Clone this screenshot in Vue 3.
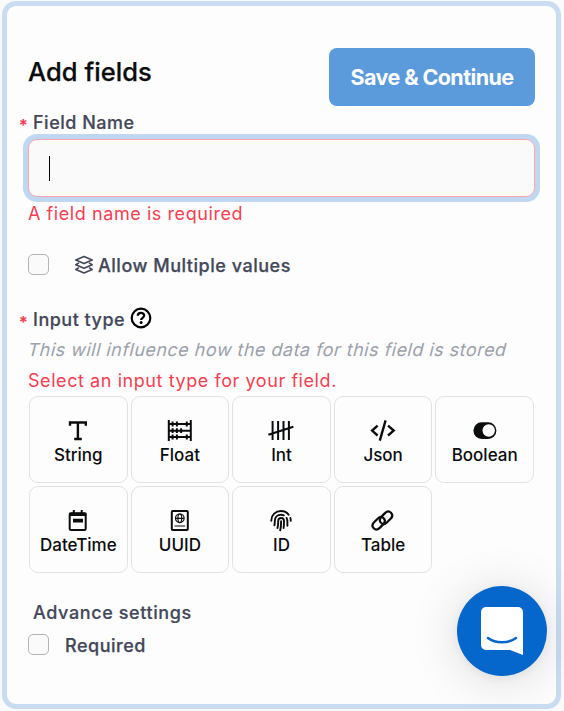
<script setup>
import { ref } from 'vue'

const types = [
  { name: 'String', icon: 'string' },
  { name: 'Float', icon: 'abacus' },
  { name: 'Int', icon: 'tally' },
  { name: 'Json', icon: 'code' },
  { name: 'Boolean', icon: 'toggle' },
  { name: 'DateTime', icon: 'calendar' },
  { name: 'UUID', icon: 'passport' },
  { name: 'ID', icon: 'fingerprint' },
  { name: 'Table', icon: 'link' },
]
const multiple = ref(false)
const required = ref(false)
</script>

<template>
  <main class="page">
    <form class="card" @submit.prevent>
      <header class="header">
        <h1 class="title">Add fields</h1>
        <button class="save" type="submit">Save &amp; Continue</button>
      </header>

      <div class="label label-name"><span class="star">*</span><span>Field Name</span></div>
      <div class="input"><span class="caret"></span></div>
      <p class="error error-name">A field name is required</p>

      <label class="check check-multiple">
        <input v-model="multiple" class="box" type="checkbox" />
        <svg class="stack" viewBox="0 0 20 20">
          <path d="M10 1.6 18.2 5.1 10 8.6 1.8 5.1Z" />
          <path d="M5 7.9 1.8 9.8 10 13.3l8.2-3.5L15 7.9" />
          <path d="M5 12.6 1.8 14.5 10 18l8.2-3.5-3.2-1.9" />
        </svg>
        <span class="check-text">Allow Multiple values</span>
      </label>

      <div class="label label-type">
        <span class="star">*</span><span>Input type</span>
        <svg class="help" viewBox="0 0 22 22">
          <circle cx="11" cy="11" r="9.3" />
          <path d="M7.8 8.8C7.8 6.9 9.2 5.9 11 5.9s3.2 1.1 3.2 2.7c0 2.2-3.1 2.2-3.1 4.4" />
          <circle class="dot" cx="11.1" cy="15.6" r="1.5" />
        </svg>
      </div>
      <p class="hint">This will influence how the data for this field is stored</p>
      <p class="error error-type">Select an input type for your field.</p>

      <div class="grid">
        <button v-for="t in types" :key="t.name" class="type" type="button">
          <svg class="icon" viewBox="0 0 28 24">
            <g v-if="t.icon === 'string'" class="serif">
              <path d="M6 6.8V3.5h15.8v3.3M13.9 3.3v16.8M10.2 20h7.6" />
            </g>
            <g v-else-if="t.icon === 'abacus'">
              <path d="M2.8 1v21M24.8 1v21M2.8 5h22M2.8 11.7h22M2.8 18h22" />
              <path d="M6.6 2.6v4.8M10.9 2.6v4.8M20.8 2.6v4.8M6.6 9.3v4.8M10.9 9.3v4.8M15.1 9.3v4.8M6.6 15.6v4.8M10.9 15.6v4.8M20.8 15.6v4.8" />
            </g>
            <g v-else-if="t.icon === 'tally'">
              <path d="M5.6 2v19M11.1 2v19M16.5 2v19M21.9 2v19M1.4 15.8l25-8" />
            </g>
            <g v-else-if="t.icon === 'code'" class="code">
              <path d="M8.6 6.6 3.1 11.6l5.5 4.9M19 6.6l5.7 5-5.7 4.9M16.6 1.3 10.8 21.7" />
            </g>
            <g v-else-if="t.icon === 'toggle'">
              <rect class="solid" x="2.4" y="3.3" width="23" height="16.6" rx="8.3" />
              <circle class="hole" cx="17.7" cy="11.5" r="6.2" />
            </g>
            <g v-else-if="t.icon === 'calendar'">
              <rect x="5.7" y="4.2" width="16" height="16.8" rx="1.5" />
              <path class="solid" d="M5 3.8h17.4v3.3H5zM9 9.8h10v3.6H9z" />
              <path d="M9.8 1v3M17.7 1v3" />
            </g>
            <g v-else-if="t.icon === 'passport'">
              <rect x="5.8" y="2" width="16" height="19" rx="1" />
              <g class="thin">
                <circle cx="13.8" cy="9.3" r="4.3" />
                <ellipse cx="13.8" cy="9.3" rx="1.9" ry="4.3" />
                <path d="M9.5 9.3h8.6M8.5 17h10.6" />
              </g>
            </g>
            <g v-else-if="t.icon === 'fingerprint'" class="print">
              <path d="M4.3 11.8v-.6c.1-5.1 4.3-9.2 9.6-9.2 3.2 0 6.1 1.5 7.8 3.8M23.4 9c.3.9.4 1.7.3 2.8" />
              <path d="M7.4 16.4c.3-1.3.4-2.6.4-4.5 0-3.6 2.6-6.2 6.2-6.2 1 0 2 .2 2.8.6M19.6 8.9c.7 1.3.8 2.6.8 4.2v3.6" />
              <path d="M10.5 19c.6-2 .7-4.1.7-7 0-1.8 1.2-3 2.900-3s2.900 1.200 2.900 3c0 2.800 0 4.700-.4 7M14.100 12.200c0 4-.1 6.500-.9 9.200" />
            </g>
            <g v-else class="link">
              <path d="M12.500 7.600 16 4.100c2-2 4.400-2 6-.4s1.600 4-.4 6l-3.800 3.800c-1.800 1.800-4.200 1.800-5.800.3-1.300-1.300-1.500-3.300-.4-5" />
              <path d="M14.200 15.400 10.700 18.900c-2 2-4.400 2-6 .4s-1.600-4 .4-6l3.800-3.800c1.800-1.800 4.200-1.800 5.800-.3 1.300 1.300 1.500 3.300.4 5" />
            </g>
          </svg>
          <span class="type-name">{{ t.name }}</span>
        </button>
      </div>

      <h2 class="advance">Advance settings</h2>
      <label class="check check-required">
        <input v-model="required" class="box" type="checkbox" />
        <span class="required-text">Required</span>
      </label>
    </form>

    <button class="chat" type="button" aria-label="Chat">
      <svg class="chat-icon" viewBox="0 0 42 48">
        <path class="bubble" d="M5 0h32a5 5 0 0 1 5 5v43l-13-5H5a5 5 0 0 1-5-5V5a5 5 0 0 1 5-5Z" />
        <path class="smile" d="M7 31c7.500 5.700 20.500 5.700 28 0" />
      </svg>
    </button>
  </main>
</template>

<style>
body {
  background: #fafafa;
}
</style>

<style scoped>
.page {
  box-sizing: border-box;
  width: 564px;
  height: 711px;
  padding: 1px 3px 2px 2px;
  overflow: hidden;
  font-family: Inter, "Liberation Sans", sans-serif;
}
.card {
  box-sizing: border-box;
  height: 708px;
  padding: 42px 21px 0;
  border: 5px solid #c9dcf2;
  border-radius: 14px;
  background: #fdfdfd;
}
.header {
  display: flex;
  justify-content: space-between;
  height: 58px;
}
.title {
  margin: 0;
  font-size: 25.5px;
  font-weight: 500;
  line-height: 48px;
  letter-spacing: 0.05px;
  color: #0b0c0e;
  white-space: nowrap;
  -webkit-text-stroke: 0.25px #0b0c0e;
}
.save {
  width: 206px;
  height: 58px;
  padding: 0;
  border: 0;
  border-radius: 8px;
  background: #5b9adb;
  color: #fff;
  font: 700 21.5px/58px Inter, "Liberation Sans", sans-serif;
  letter-spacing: -0.6px;
  white-space: nowrap;
}
.label {
  display: flex;
  align-items: center;
  margin-left: -9px;
  font-size: 18px;
  font-weight: 500;
  letter-spacing: 0.5px;
  color: #434859;
  -webkit-text-stroke: 0.2px currentColor;
}
.star {
  width: 14px;
  padding-top: 5px;
  font-size: 16px;
  font-weight: 600;
  color: #f43f52;
}
.label-name {
  height: 33px;
}
.input {
  display: flex;
  align-items: center;
  box-sizing: border-box;
  height: 58px;
  padding-left: 20px;
  border: 1px solid #fda4af;
  border-radius: 9px;
  background: #fafafa;
  box-shadow: 0 0 0 5px #bfd7f0;
}
.caret {
  width: 1px;
  height: 25px;
  background: #000;
}
.error,
.hint {
  margin: 0;
  font-size: 18px;
  letter-spacing: 0.57px;
  white-space: nowrap;
}
.error {
  color: #f43f52;
}
.error-name {
  line-height: 34px;
}
.check {
  display: flex;
  align-items: center;
  font-size: 18px;
  font-weight: 500;
  letter-spacing: 0.52px;
  color: #434859;
  -webkit-text-stroke: 0.25px currentColor;
}
.check-multiple {
  height: 67px;
}
.box {
  appearance: none;
  box-sizing: border-box;
  width: 21px;
  height: 21px;
  margin: 0;
  border: 1px solid #b4b4b4;
  border-radius: 5px;
  background: #fafafa;
}
.stack {
  width: 20px;
  height: 20px;
  margin-left: 25px;
  fill: none;
  stroke: #434859;
  stroke-width: 1.6;
  stroke-linejoin: round;
}
.check-text {
  margin-left: 4px;
  padding-top: 2px;
}
.label-type {
  height: 36px;
  padding-top: 3px;
}
.help {
  width: 22px;
  height: 22px;
  margin: -3px 0 0 5px;
  fill: none;
  stroke: #000;
  stroke-width: 2.2;
}
.dot {
  fill: #000;
  stroke: none;
}
.hint {
  letter-spacing: 0.47px;
  line-height: 26px;
  color: #9ca1ac;
  transform: skewX(-14deg);
}
.error-type {
  padding-top: 3px;
  line-height: 30px;
}
.grid {
  display: grid;
  grid-template-columns: repeat(5, 1fr);
  grid-auto-rows: 87px;
  gap: 3px;
  padding: 0 1px;
}
.type {
  display: flex;
  flex-direction: column;
  align-items: center;
  box-sizing: border-box;
  padding: 22px 0 0;
  border: 1px solid #e2e2e3;
  border-radius: 9px;
  background: #fdfdfd;
  color: #0b0c0e;
}
.icon {
  width: 28px;
  height: 24px;
  fill: none;
  stroke: #0b0c0e;
  stroke-width: 2;
}
.serif,
.code {
  stroke-width: 2.4;
}
.solid {
  fill: #0b0c0e;
  stroke: none;
}
.hole {
  fill: #fdfdfd;
  stroke: none;
}
.thin {
  stroke-width: 1.2;
}
.print {
  stroke-width: 1.9;
  stroke-linecap: round;
}
.link {
  stroke-width: 2.2;
  stroke-linecap: round;
}
.type-name {
  font: 500 17px/24px Inter, "Liberation Sans", sans-serif;
}
.advance {
  margin: 24px 0 0 5px;
  font-size: 18px;
  font-weight: 500;
  line-height: 32px;
  letter-spacing: 0.6px;
  color: #434859;
  -webkit-text-stroke: 0.2px currentColor;
}
.check-required {
  height: 31px;
}
.required-text {
  margin-left: 16px;
  padding-top: 2px;
}
.chat {
  position: absolute;
  left: 457px;
  top: 586px;
  display: flex;
  align-items: center;
  justify-content: center;
  width: 90px;
  height: 90px;
  padding: 0;
  border: 0;
  border-radius: 50%;
  background: #0567cb;
  box-shadow: 0 2px 10px rgba(0, 0, 0, 0.06), 0 4px 50px rgba(0, 0, 0, 0.14);
}
.chat-icon {
  width: 42px;
  height: 48px;
}
.bubble {
  fill: #fff;
}
.smile {
  fill: none;
  stroke: #0567cb;
  stroke-width: 2.5;
  stroke-linecap: round;
}
</style>
